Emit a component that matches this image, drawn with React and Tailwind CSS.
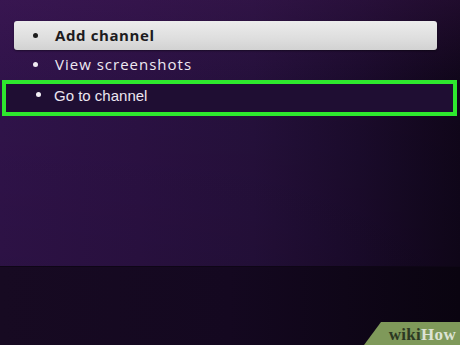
export default function App() {
  const items = ['Add channel', 'View screenshots', 'Go to channel'];

  return (
    <div className="relative w-[460px] h-[345px] overflow-hidden bg-[#1a0b26]">
      {/* wall */}
      <div className="h-[266px] bg-[linear-gradient(90deg,#30134a_0%,#2b1143_30%,#25103b_55%,#1b0b2c_78%,#10061a_100%)]">
        <div className="h-full bg-[linear-gradient(180deg,rgba(80,30,100,0.25)_0%,rgba(0,0,0,0)_30%,rgba(0,0,0,0.08)_100%)] pt-[21px]">
          {/* selected row */}
          <div className="ml-[14px] mr-[23px] h-[29px] rounded-[3px] bg-[linear-gradient(180deg,#ececec_0%,#dedede_60%,#d2d2d2_100%)] flex items-center pl-[19px] shadow-[0_1px_2px_rgba(0,0,0,0.4)]">
            <span className="w-[5px] h-[5px] rounded-full bg-[#1c1c1c]" />
            <span className="ml-[17px] font-['Open_Sans',sans-serif] font-bold text-[15px] tracking-[0.6px] text-[#1d1b20]">
              {items[0]}
            </span>
          </div>

          <div className="mx-[14px] h-[29px] flex items-center pl-[19px]">
            <span className="w-[5px] h-[5px] rounded-full bg-[#f0eaf2]" />
            <span className="ml-[17px] font-['Open_Sans',sans-serif] text-[15px] tracking-[1px] text-[#efe9f2]">
              {items[1]}
            </span>
          </div>

          {/* highlighted option */}
          <div className="ml-[2px] mr-[3px] mt-px h-[36px] border-[4px] border-[#2ee82e] bg-[#1f0e33] flex items-center pl-[30px] pb-[3px]">
            <span className="w-[5px] h-[5px] rounded-full bg-[#f4f0f6] mb-[4px]" />
            <span className="ml-[13px] font-['Liberation_Sans',Arial,sans-serif] text-[15px] text-[#ece6f0]">
              {items[2]}
            </span>
          </div>
        </div>
      </div>

      {/* floor */}
      <div className="h-[79px] bg-[linear-gradient(90deg,#170a22_0%,#140820_50%,#0a0410_100%)] border-t border-[#0e0616]" />

      {/* wikiHow badge */}
      <div className="absolute right-0 bottom-0 w-[96px] h-[23px] bg-[#7f995a] [clip-path:polygon(17px_0,100%_0,100%_100%,0_100%)] flex items-center justify-end pr-[4px] pt-[1px]">
        <span className="font-['Liberation_Serif',serif] font-bold text-[17px] leading-none tracking-[0.3px] text-[#2c3822]">wiki</span>
        <span className="font-['Liberation_Serif',serif] font-bold text-[17px] leading-none tracking-[0.3px] text-[#dde3d4]">How</span>
      </div>
    </div>
  );
}
